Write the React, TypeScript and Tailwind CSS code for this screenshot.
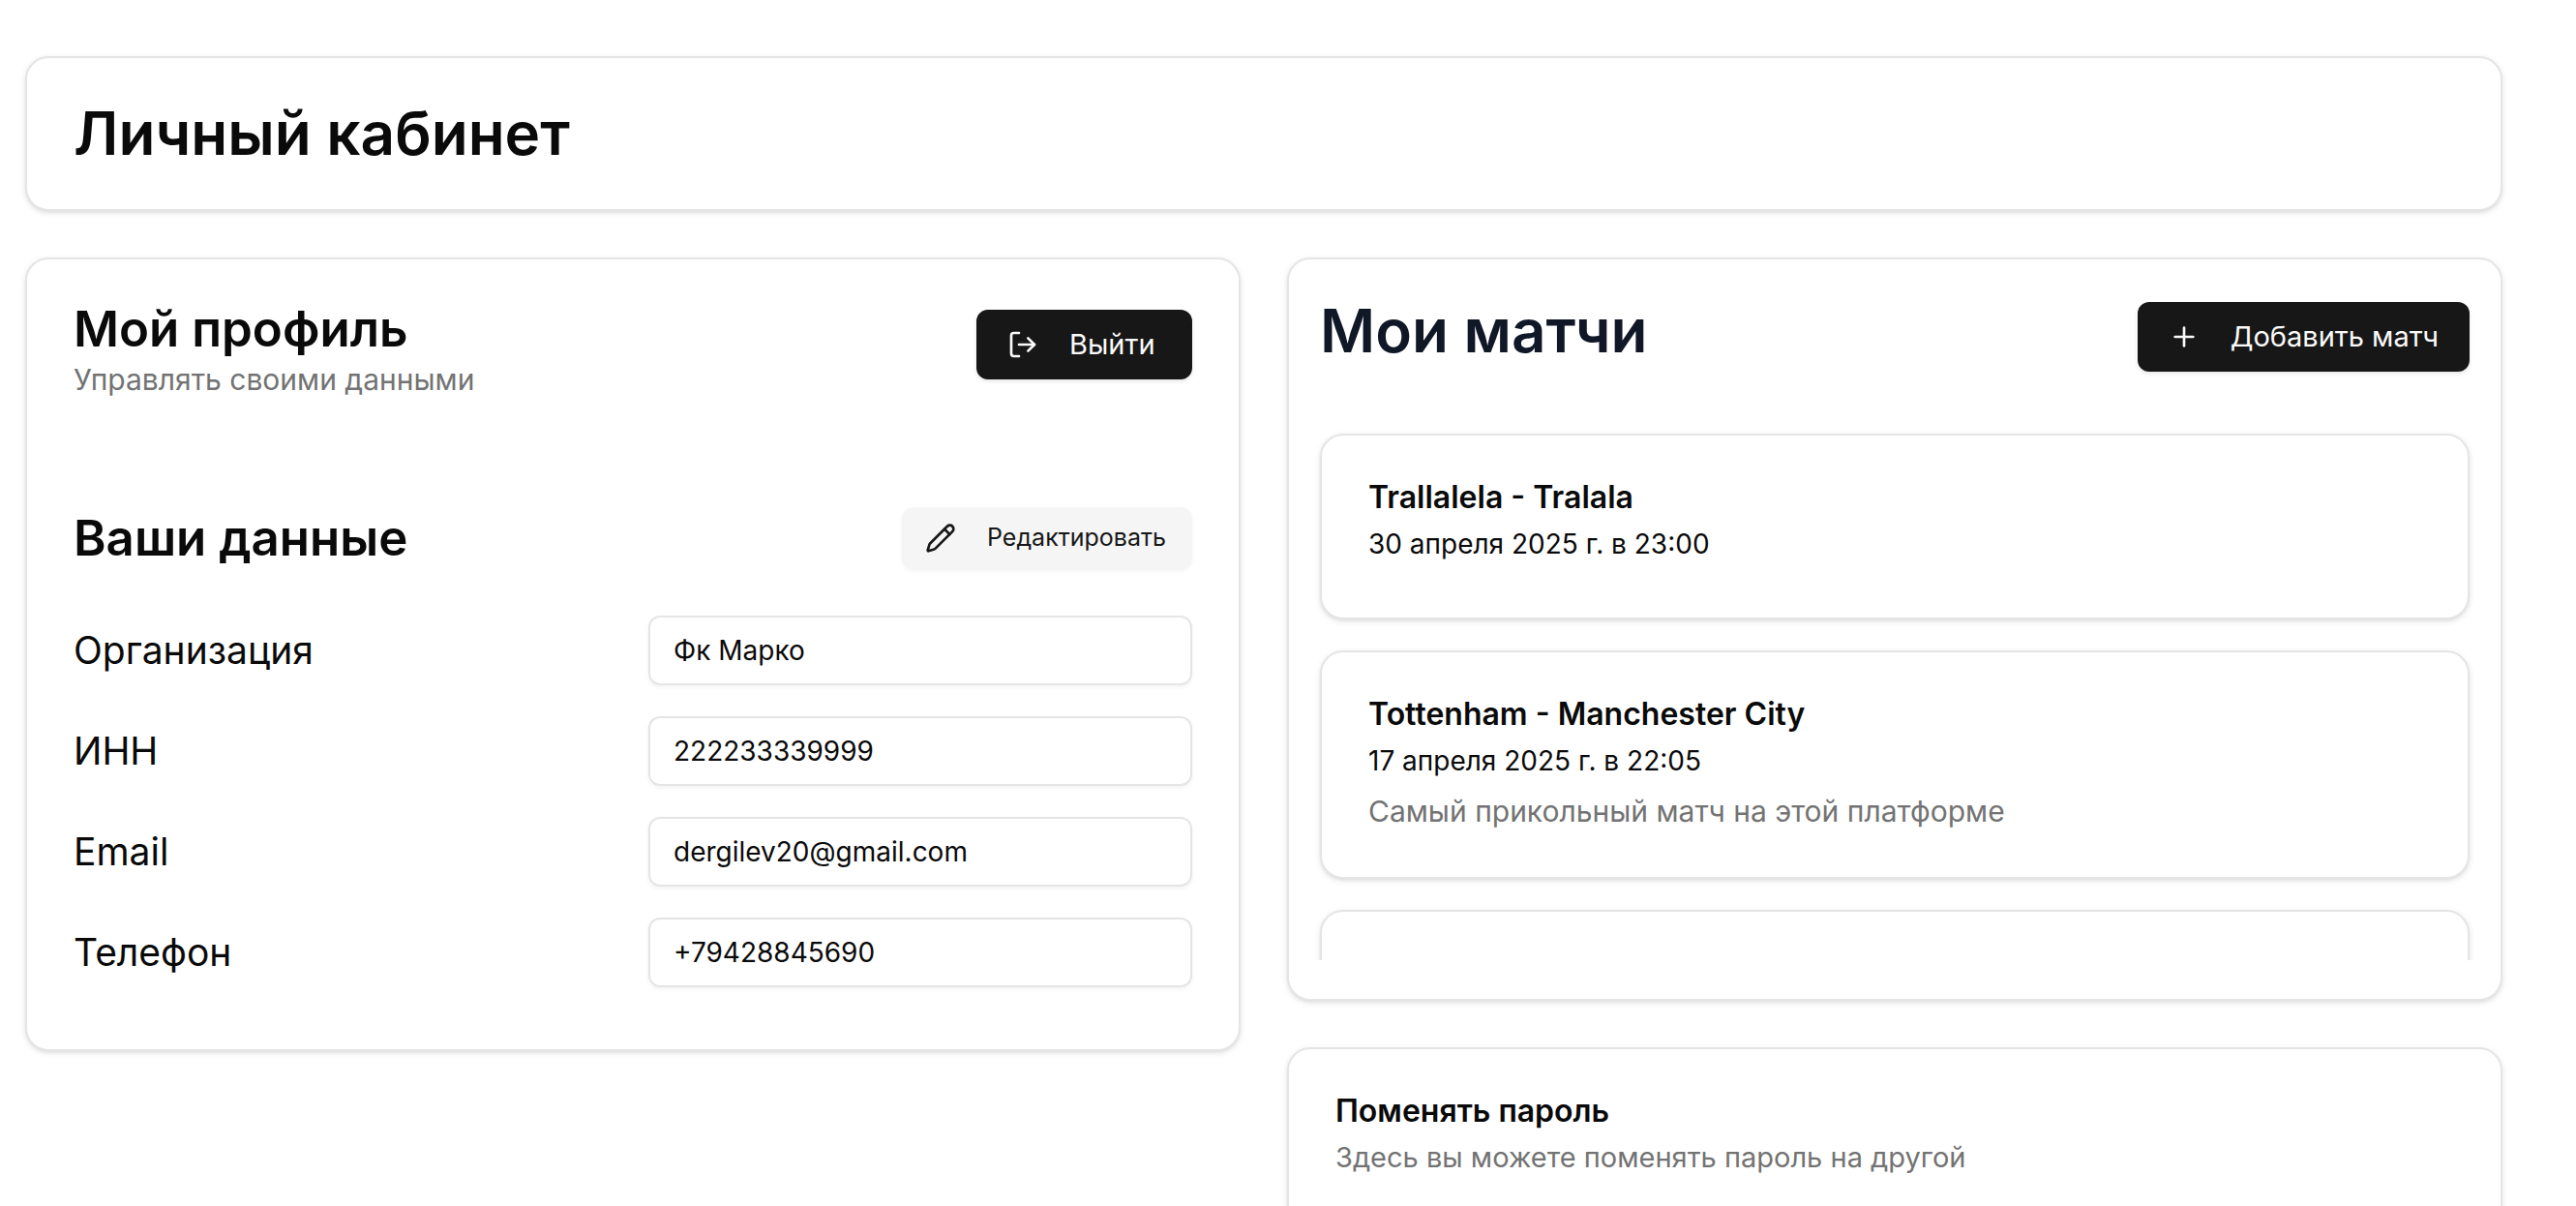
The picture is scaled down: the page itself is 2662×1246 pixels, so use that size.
import type { ReactNode } from "react";
import { LogOut, Pencil, Plus } from "lucide-react";

const fields = [
  { id: "organization", label: "Организация", type: "text", value: "Фк Марко" },
  { id: "inn", label: "ИНН", type: "text", value: "222233339999" },
  { id: "email", label: "Email", type: "email", value: "dergilev20@gmail.com" },
  { id: "phone", label: "Телефон", type: "tel", value: "+79428845690" },
];

const matches = [
  { title: "Trallalela - Tralala", date: "30 апреля 2025 г. в 23:00", note: "" },
  {
    title: "Tottenham - Manchester City",
    date: "17 апреля 2025 г. в 22:05",
    note: "Самый прикольный матч на этой платформе",
  },
];

function Card({ className, children }: { className: string; children?: ReactNode }) {
  return (
    <section
      className={`rounded-3xl border-2 border-neutral-200 bg-white shadow-[0_2px_6px_rgba(0,0,0,0.1),0_2px_4px_-2px_rgba(0,0,0,0.1)] ${className}`}
    >
      {children}
    </section>
  );
}

function PrimaryButton({ icon, children }: { icon: ReactNode; children: ReactNode }) {
  return (
    <button
      type="button"
      className="flex h-18 min-w-[223px] shrink-0 items-center gap-8 rounded-xl bg-neutral-900 px-8 text-[29px] text-neutral-50 shadow-[0_2px_4px_rgba(0,0,0,0.1)]"
    >
      {icon}
      {children}
    </button>
  );
}

function Profile() {
  return (
    <Card className="p-12">
      <header className="flex items-start justify-between pt-1">
        <div className="-mt-1">
          <h2 className="text-[51px] leading-12 font-semibold">Мой профиль</h2>
          <p className="mt-2 text-[30px] leading-10 text-neutral-500">Управлять своими данными</p>
        </div>
        <PrimaryButton icon={<LogOut size={32} />}>Выйти</PrimaryButton>
      </header>
      <div className="mt-28 flex items-center justify-between">
        <h3 className="text-[51px] leading-16 font-semibold">Ваши данные</h3>
        <button
          type="button"
          className="flex h-16 min-w-[300px] items-center gap-8 rounded-xl bg-neutral-100 px-6 text-[25px] text-neutral-900 shadow-[0_2px_4px_rgba(0,0,0,0.05)]"
        >
          <Pencil size={32} />
          Редактировать
        </button>
      </div>
      <form className="mt-12 mb-4 flex flex-col gap-8">
        {fields.map((f) => (
          <div key={f.id} className="grid grid-cols-2 items-center gap-8">
            <label htmlFor={f.id} className="text-[39px] leading-14">
              {f.label}
            </label>
            <input
              id={f.id}
              type={f.type}
              defaultValue={f.value}
              className="h-18 w-full rounded-xl border-2 border-neutral-200 px-6 text-[28px] shadow-[0_2px_4px_rgba(0,0,0,0.05)]"
            />
          </div>
        ))}
      </form>
    </Card>
  );
}

function Matches() {
  return (
    <Card className="px-8 pt-11 pb-10">
      <header className="flex items-start justify-between">
        <h2 className="text-[62px] leading-15 font-semibold text-gray-900">Мои матчи</h2>
        <PrimaryButton icon={<Plus size={32} />}>Добавить матч</PrimaryButton>
      </header>
      <div className="-mx-2 mt-14 h-[552px] overflow-y-auto px-2 pt-2 [scrollbar-width:none]">
        <div className="flex flex-col gap-8">
          {matches.map((m) => (
            <Card key={m.title} className="p-12">
              <h3 className="text-[32px] leading-8 font-semibold">{m.title}</h3>
              <p className="mt-3 pb-2 text-[28px] leading-10">{m.date}</p>
              {m.note ? (
                <p className="mt-1 text-[30px] leading-10 text-neutral-500">{m.note}</p>
              ) : null}
            </Card>
          ))}
          <Card className="h-48" />
        </div>
      </div>
    </Card>
  );
}

export default function App() {
  return (
    <main className="h-screen overflow-y-auto bg-white pt-[58px] pr-[76px] pl-[26px] font-['Inter','Liberation_Sans',sans-serif] text-neutral-950 [scrollbar-width:none]">
      <Card className="p-12">
        <h1 className="text-[62px] leading-15 font-semibold">Личный кабинет</h1>
      </Card>
      <div className="mt-12 grid grid-cols-2 items-start gap-12">
        <Profile />
        <div className="flex flex-col gap-12">
          <Matches />
          <Card className="p-12 pb-28">
            <h2 className="text-[32px] leading-8 font-semibold">Поменять пароль</h2>
            <p className="mt-3 text-[29px] leading-10 text-neutral-500">
              Здесь вы можете поменять пароль на другой
            </p>
          </Card>
        </div>
      </div>
    </main>
  );
}
